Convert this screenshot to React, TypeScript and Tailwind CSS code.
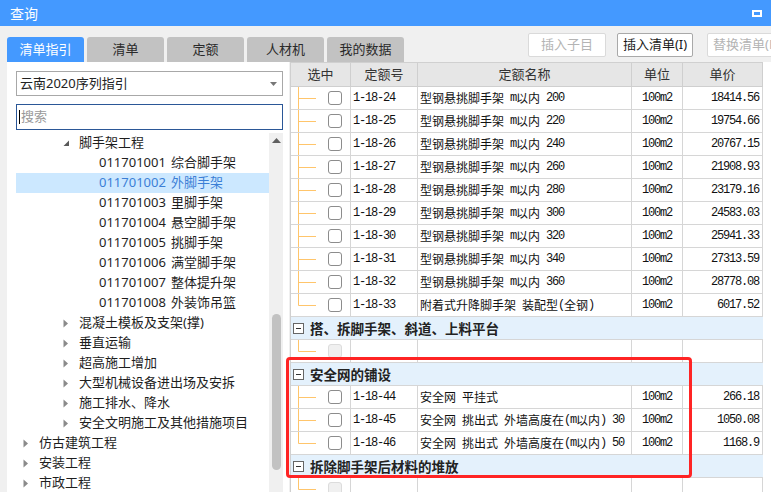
import React from "react";

const monoRun = "font-['Liberation_Mono','Noto_Sans_CJK_SC',monospace] tracking-[-1.2px]";
const cjkRun = "font-['Noto_Sans_CJK_SC',sans-serif]";

const Mixed = ({ text }: { text: string }) => (
  <>
    {text
      .split(/([\x20-\x7e]+)/)
      .filter(Boolean)
      .map((part, i) =>
        /^[\x20-\x7e]+$/.test(part) ? (
          <span key={i} className={monoRun}>
            {part}
          </span>
        ) : (
          <span key={i} className={cjkRun}>
            {part}
          </span>
        )
      )}
  </>
);

type TreeNode = {
  level: 0 | 1 | 2;
  label: string;
  code?: string;
  state: "open" | "closed" | "leaf";
  selected?: boolean;
};

const tree: TreeNode[] = [
  { level: 1, label: "脚手架工程", state: "open" },
  { level: 2, code: "011701001", label: "综合脚手架", state: "leaf" },
  { level: 2, code: "011701002", label: "外脚手架", state: "leaf", selected: true },
  { level: 2, code: "011701003", label: "里脚手架", state: "leaf" },
  { level: 2, code: "011701004", label: "悬空脚手架", state: "leaf" },
  { level: 2, code: "011701005", label: "挑脚手架", state: "leaf" },
  { level: 2, code: "011701006", label: "满堂脚手架", state: "leaf" },
  { level: 2, code: "011701007", label: "整体提升架", state: "leaf" },
  { level: 2, code: "011701008", label: "外装饰吊篮", state: "leaf" },
  { level: 1, label: "混凝土模板及支架(撑)", state: "closed" },
  { level: 1, label: "垂直运输", state: "closed" },
  { level: 1, label: "超高施工增加", state: "closed" },
  { level: 1, label: "大型机械设备进出场及安拆", state: "closed" },
  { level: 1, label: "施工排水、降水", state: "closed" },
  { level: 1, label: "安全文明施工及其他措施项目", state: "closed" },
  { level: 0, label: "仿古建筑工程", state: "closed" },
  { level: 0, label: "安装工程", state: "closed" },
  { level: 0, label: "市政工程", state: "closed" },
];

const indent = { 0: "pl-[7px]", 1: "pl-[47px]", 2: "pl-[83px]" };

const Arrow = ({ state }: { state: TreeNode["state"] }) => {
  if (state === "leaf") return null;
  return (
    <span className="w-[16px] shrink-0 flex items-center">
      {state === "open" ? (
        <svg width="7" height="7" viewBox="0 0 7 7">
          <path d="M6 0.5 L6 6 L0.5 6 Z" fill="#595959" />
        </svg>
      ) : (
        <svg width="6" height="9" viewBox="0 0 6 9">
          <path d="M0.5 0.5 L5 4.5 L0.5 8.5 Z" fill="#8a8a8a" />
        </svg>
      )}
    </span>
  );
};

type Row =
  | { kind: "item"; code: string; name: string; unit: string; price: string; line: "mid" | "end" }
  | { kind: "group"; title: string }
  | { kind: "empty" };

const rows: Row[] = [
  { kind: "item", code: "1-18-24", name: "型钢悬挑脚手架 m以内 200", unit: "100m2", price: "18414.56", line: "mid" },
  { kind: "item", code: "1-18-25", name: "型钢悬挑脚手架 m以内 220", unit: "100m2", price: "19754.66", line: "mid" },
  { kind: "item", code: "1-18-26", name: "型钢悬挑脚手架 m以内 240", unit: "100m2", price: "20767.15", line: "mid" },
  { kind: "item", code: "1-18-27", name: "型钢悬挑脚手架 m以内 260", unit: "100m2", price: "21908.93", line: "mid" },
  { kind: "item", code: "1-18-28", name: "型钢悬挑脚手架 m以内 280", unit: "100m2", price: "23179.16", line: "mid" },
  { kind: "item", code: "1-18-29", name: "型钢悬挑脚手架 m以内 300", unit: "100m2", price: "24583.03", line: "mid" },
  { kind: "item", code: "1-18-30", name: "型钢悬挑脚手架 m以内 320", unit: "100m2", price: "25941.33", line: "mid" },
  { kind: "item", code: "1-18-31", name: "型钢悬挑脚手架 m以内 340", unit: "100m2", price: "27313.59", line: "mid" },
  { kind: "item", code: "1-18-32", name: "型钢悬挑脚手架 m以内 360", unit: "100m2", price: "28778.08", line: "mid" },
  { kind: "item", code: "1-18-33", name: "附着式升降脚手架 装配型(全钢)", unit: "100m2", price: "6017.52", line: "end" },
  { kind: "group", title: "搭、拆脚手架、斜道、上料平台" },
  { kind: "empty" },
  { kind: "group", title: "安全网的铺设" },
  { kind: "item", code: "1-18-44", name: "安全网 平挂式", unit: "100m2", price: "266.18", line: "mid" },
  { kind: "item", code: "1-18-45", name: "安全网 挑出式 外墙高度在(m以内) 30", unit: "100m2", price: "1050.08", line: "mid" },
  { kind: "item", code: "1-18-46", name: "安全网 挑出式 外墙高度在(m以内) 50", unit: "100m2", price: "1168.9", line: "end" },
  { kind: "group", title: "拆除脚手架后材料的堆放" },
  { kind: "empty" },
];

const Connector = ({ end }: { end: boolean }) => (
  <svg width="28" height="22" viewBox="0 0 28 22" className="shrink-0">
    <line x1="7.5" y1="0" x2="7.5" y2={end ? 11.5 : 22} stroke="#ffc56b" strokeWidth="1" />
    <line x1="7.5" y1="11.5" x2="25" y2="11.5" stroke="#ffc56b" strokeWidth="1" />
  </svg>
);

const cell = "h-full border-r border-[#d6d6d6] flex items-center shrink-0";

const TableRow = ({ row }: { row: Row }) => {
  if (row.kind === "group") {
    return (
      <div className="h-[23px] border-b border-[#d6d6d6] bg-[#e4f1fc] flex items-center pl-[2px]">
        <span className="w-[11px] h-[11px] border border-[#666] bg-white flex items-center justify-center">
          <span className="w-[5px] h-[1px] bg-[#333]" />
        </span>
        <span className="ml-[6px] text-[13.5px] font-bold text-[#222] font-['Noto_Sans_CJK_SC',sans-serif]">
          {row.title}
        </span>
      </div>
    );
  }
  const item = row.kind === "item" ? row : null;
  return (
    <div className="h-[23px] border-b border-[#d6d6d6] flex text-[12px] text-[#111] whitespace-pre">
      <div className={`${cell} w-[60px]`}>
        <Connector end={item ? item.line === "end" : true} />
        {item ? (
          <span className="ml-[9px] w-[14px] h-[14px] rounded-[3px] border border-[#8c8c8c] bg-white" />
        ) : (
          <span className="ml-[9px] w-[14px] h-[14px] rounded-[3px] border border-[#dcdcdc] bg-[#f0f0f0]" />
        )}
      </div>
      <div className={`${cell} w-[67px] pl-[2px]`}>{item && <span className={monoRun}>{item.code}</span>}</div>
      <div className={`${cell} w-[214px] pl-[2px] overflow-hidden`}>{item && <Mixed text={item.name} />}</div>
      <div className={`${cell} w-[51px] justify-center`}>{item && <span className={monoRun}>{item.unit}</span>}</div>
      <div className={`${cell} w-[80px] justify-end pr-[3px]`}>{item && <span className={monoRun}>{item.price}</span>}</div>
    </div>
  );
};

export default function App() {
  return (
    <div className="relative w-[771px] h-[492px] overflow-hidden bg-[#f0f0f0] flex flex-col font-['Noto_Sans','Noto_Sans_CJK_SC',sans-serif] text-[#222]">
      {/* title bar */}
      <div className="h-[26px] shrink-0 bg-[#4499ff] flex items-center justify-between pl-[10px] pr-[9px]">
        <span className="text-white text-[14px]">查询</span>
        <span className="w-[10px] h-[7px] border-2 border-white" />
      </div>

      {/* tabs + buttons */}
      <div className="h-[36px] shrink-0 flex">
        <div className="flex items-end gap-[3px] pl-[7px]">
          {["清单指引", "清单", "定额", "人材机", "我的数据"].map((t, i) => (
            <div
              key={t}
              className={`w-[77px] h-[25px] rounded-t-[3px] flex items-center justify-center text-[13px] ${
                i === 0 ? "bg-[#4499ff] text-white" : "bg-[#c2c2c2] text-[#2a2a2a]"
              }`}
            >
              {t}
            </div>
          ))}
        </div>
        <div className="flex ml-[124px] mt-[7px] h-[24px] shrink-0 text-[13px]">
          <div className="w-[78px] h-full border border-[#dadada] rounded-[2px] bg-white text-[#b4b4b4] flex items-center justify-center">
            插入子目
          </div>
          <div className="ml-[11px] w-[76px] h-full border border-[#a9a9a9] rounded-[2px] bg-white text-[#1a1a1a] flex items-center justify-center">
            插入清单(I)
          </div>
          <div className="ml-[14px] w-[80px] h-full border border-[#dadada] rounded-[2px] bg-white text-[#b4b4b4] flex items-center pl-[5px] shrink-0 whitespace-nowrap">
            替换清单(R)
          </div>
        </div>
      </div>

      {/* main */}
      <div className="flex flex-1 min-h-0">
        {/* left panel */}
        <div className="ml-[7px] w-[282px] shrink-0 bg-white flex flex-col pl-[9px] pr-[6px] pt-[9px]">
          <div className="h-[25px] border border-[#a8a8a8] flex items-center justify-between pl-[3px] pr-[5px] text-[13px]">
            <span>云南2020序列指引</span>
            <svg width="7" height="4" viewBox="0 0 7 4">
              <path d="M0 0 L7 0 L3.5 4 Z" fill="#777" />
            </svg>
          </div>
          <div className="mt-[8px] h-[26px] border border-[#2b5797] flex items-center pl-[2px] text-[13px]">
            <span className="w-[1px] h-[14px] bg-black" />
            <span className="text-[#9a9a9a] ml-[1px]">搜索</span>
          </div>
          <div className="mt-[3px] flex flex-1 min-h-0">
            <div className="w-[253px] shrink-0 overflow-hidden text-[13px]">
              {tree.map((n, i) => (
                <div
                  key={i}
                  className={`h-[20px] flex items-center whitespace-nowrap ${indent[n.level]} ${
                    n.selected ? "bg-[#cce8ff] text-[#3b7fd6]" : "text-[#1e1e1e]"
                  }`}
                >
                  <Arrow state={n.state} />
                  {n.code && <span className="mr-[5px]">{n.code}</span>}
                  <span>{n.label}</span>
                </div>
              ))}
            </div>
            <div className="w-[14px] shrink-0 bg-[#f0f0f0] flex flex-col items-center pt-[5px]">
              <svg width="9" height="5" viewBox="0 0 9 5">
                <path d="M0 5 L4.5 0 L9 5 Z" fill="#606060" />
              </svg>
              <div className="mt-[171px] w-[9px] h-[156px] rounded-full bg-[#c2c2c2]" />
            </div>
          </div>
        </div>

        {/* right table */}
        <div className="ml-[1px] flex-1 bg-white">
          <div className="w-[473px] border-l border-t border-[#d0d0d0]">
            <div className="h-[24px] flex bg-[#e6e6e6] border-b border-[#cfcfcf] text-[13px] text-[#333]">
              <div className="w-[60px] border-r border-[#cfcfcf] flex items-center justify-center">选中</div>
              <div className="w-[67px] border-r border-[#cfcfcf] flex items-center justify-center">定额号</div>
              <div className="w-[214px] border-r border-[#cfcfcf] flex items-center justify-center">定额名称</div>
              <div className="w-[51px] border-r border-[#cfcfcf] flex items-center justify-center">单位</div>
              <div className="w-[80px] border-r border-[#cfcfcf] flex items-center justify-center">单价</div>
            </div>
            {rows.map((r, i) => (
              <TableRow key={i} row={r} />
            ))}
          </div>
        </div>
      </div>

      {/* red highlight annotation */}
      <div className="absolute left-[286px] top-[357px] w-[406px] h-[121px] border-[3px] border-[#ff2424] rounded-[4px] pointer-events-none" />
    </div>
  );
}
